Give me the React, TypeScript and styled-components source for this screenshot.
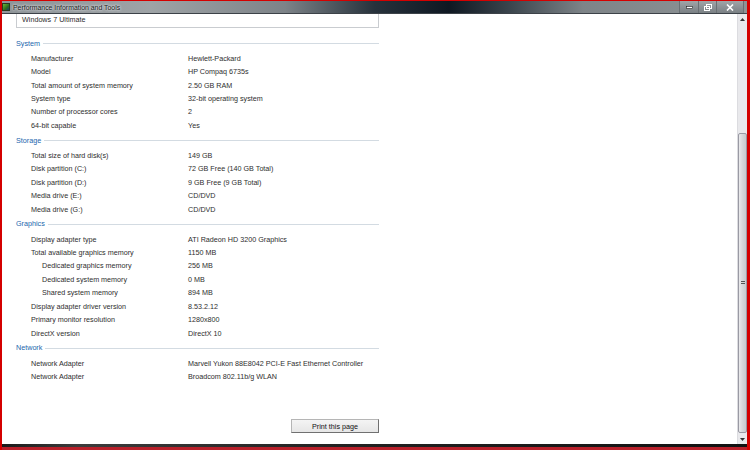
import styled, { createGlobalStyle } from "styled-components";

const GlobalStyle = createGlobalStyle`
    html, body {
        margin: 0;
        padding: 0;
        background: #d40000;
    }
    body {
        font-family: "Liberation Sans", Arial, sans-serif;
    }
`;

const Frame = styled.div`
    width: 750px;
    height: 450px;
    box-sizing: border-box;
    padding: 1px 3px 0 2px;
    background: #d40000;
    display: flex;
    flex-direction: column;
    overflow: hidden;
`;

const TitleBar = styled.div`
    height: 12px;
    flex-shrink: 0;
    display: flex;
    align-items: center;
    background: linear-gradient(
        90deg,
        #8e9498 0%,
        #9ea3a6 20%,
        #7d8388 38%,
        #27323c 50%,
        #0f1822 60%,
        #3a444c 68%,
        #7e8488 78%,
        #8f9496 100%
    );
    border-bottom: 1px solid #3c4248;
`;

const AppIcon = styled.div`
    width: 6px;
    height: 6px;
    margin: 0 3px 0 0;
    background: linear-gradient(135deg, #6bb83a 0%, #2f6f1f 60%, #1c3d6e 100%);
    border: 1px solid #2a3a20;
`;

const TitleText = styled.span`
    flex: 1;
    font-size: 6.9px;
    color: #1a1a1a;
    text-shadow: 0 0 3px #e8ecee, 0 0 2px #e8ecee;
    white-space: nowrap;
`;

const Caption = styled.div`
    display: flex;
    align-items: center;
    height: 100%;
    margin-right: 3px;
    background: linear-gradient(180deg, #a0a5a8 0%, #7a8084 100%);
    border-left: 1px solid #6a7074;
`;

const CaptionButton = styled.div<{ $w: number }>`
    width: ${(p) => p.$w}px;
    height: 100%;
    display: flex;
    align-items: center;
    justify-content: center;
    border-right: 1px solid #6a7074;
`;

const Body = styled.div`
    flex: 1;
    display: flex;
    min-height: 0;
    background: #fff;
`;

const Content = styled.div`
    flex: 1;
    padding: 0 0 0 14px;
    display: flex;
    flex-direction: column;
    font-size: 7.2px;
    color: #2e2e2e;
`;

const EditionBox = styled.div`
    width: 363px;
    box-sizing: border-box;
    height: 14px;
    border: 1px solid #c9ccd0;
    border-top: none;
    padding: 0 5px 3px;
    display: flex;
    align-items: center;
    margin-bottom: 7px;
`;

const Section = styled.div`
    width: 363px;
    display: flex;
    flex-direction: column;
`;

const Header = styled.div`
    height: 16px;
    padding-bottom: 0.5px;
    display: flex;
    align-items: center;
    gap: 3px;
    color: #2166ad;

    &::after {
        content: "";
        flex: 1;
        height: 1px;
        background: #d3dbe2;
        margin-top: 1px;
    }
`;

const Row = styled.div`
    height: 13.45px;
    display: flex;
    align-items: center;
`;

const Label = styled.div<{ $indent?: boolean }>`
    width: ${(p) => (p.$indent ? 146 : 157)}px;
    padding-left: ${(p) => (p.$indent ? 26 : 15)}px;
    white-space: nowrap;
`;

const Value = styled.div`
    white-space: nowrap;
`;

const ButtonRow = styled.div`
    width: 363px;
    display: flex;
    justify-content: flex-end;
    margin-top: 36px;
`;

const PrintButton = styled.button`
    width: 88px;
    height: 14px;
    padding: 0;
    font-family: "Liberation Sans", Arial, sans-serif;
    font-size: 7.2px;
    color: #111;
    background: linear-gradient(180deg, #f4f4f4 0%, #e6e6e6 100%);
    border: 1px solid #b5b5b5;
    border-right-color: #707070;
    border-bottom-color: #707070;
    border-radius: 0;
`;

const Scrollbar = styled.div`
    width: 9px;
    display: flex;
    flex-direction: column;
    background: #e9e9ec;
    border-left: 1px solid #dcdce0;
`;

const Arrow = styled.div`
    height: 10px;
    display: flex;
    align-items: center;
    justify-content: center;
`;

const Track = styled.div`
    flex: 1;
    display: flex;
    flex-direction: column;
    justify-content: flex-end;
`;

const Thumb = styled.div`
    height: 300px;
    margin: 0 0 1px 0;
    box-sizing: border-box;
    border: 1px solid #9a9aa4;
    border-radius: 2px;
    background: linear-gradient(90deg, #eaeaec 0%, #d6d8da 50%, #c8cbce 100%);
    display: flex;
    align-items: center;
    justify-content: center;
`;

const Grip = styled.div`
    width: 4px;
    height: 4px;
    background: repeating-linear-gradient(180deg, #555 0 1px, transparent 1px 2px);
`;

const BottomEdge = styled.div`
    height: 3px;
    flex-shrink: 0;
    background: linear-gradient(90deg, #1a1a1a 0%, #3c3c3c 10%, #222 45%, #111 100%);
`;

const Taskbar = styled.div`
    height: 3px;
    flex-shrink: 0;
    background: #b8202a;
`;

type Item = { label: string; value: string; indent?: boolean };

const sections: { title: string; items: Item[] }[] = [
    {
        title: "System",
        items: [
            { label: "Manufacturer", value: "Hewlett-Packard" },
            { label: "Model", value: "HP Compaq 6735s" },
            { label: "Total amount of system memory", value: "2.50 GB RAM" },
            { label: "System type", value: "32-bit operating system" },
            { label: "Number of processor cores", value: "2" },
            { label: "64-bit capable", value: "Yes" },
        ],
    },
    {
        title: "Storage",
        items: [
            { label: "Total size of hard disk(s)", value: "149 GB" },
            { label: "Disk partition (C:)", value: "72 GB Free (140 GB Total)" },
            { label: "Disk partition (D:)", value: "9 GB Free (9 GB Total)" },
            { label: "Media drive (E:)", value: "CD/DVD" },
            { label: "Media drive (G:)", value: "CD/DVD" },
        ],
    },
    {
        title: "Graphics",
        items: [
            { label: "Display adapter type", value: "ATI Radeon HD 3200 Graphics" },
            { label: "Total available graphics memory", value: "1150 MB" },
            { label: "Dedicated graphics memory", value: "256 MB", indent: true },
            { label: "Dedicated system memory", value: "0 MB", indent: true },
            { label: "Shared system memory", value: "894 MB", indent: true },
            { label: "Display adapter driver version", value: "8.53.2.12" },
            { label: "Primary monitor resolution", value: "1280x800" },
            { label: "DirectX version", value: "DirectX 10" },
        ],
    },
    {
        title: "Network",
        items: [
            { label: "Network Adapter", value: "Marvell Yukon 88E8042 PCI-E Fast Ethernet Controller" },
            { label: "Network Adapter", value: "Broadcom 802.11b/g WLAN" },
        ],
    },
];

const App = () => {
    return (
        <>
            <GlobalStyle />
            <Frame>
                <TitleBar>
                    <AppIcon />
                    <TitleText>Performance Information and Tools</TitleText>
                    <Caption>
                        <CaptionButton $w={18}>
                            <svg width="7" height="3" viewBox="0 0 7 3">
                                <rect x="0.5" y="0.5" width="6" height="2" fill="#fff" stroke="#222" strokeWidth="0.6" />
                            </svg>
                        </CaptionButton>
                        <CaptionButton $w={17}>
                            <svg width="8" height="7" viewBox="0 0 8 7">
                                <rect x="2.5" y="0.5" width="5" height="4" fill="none" stroke="#fff" strokeWidth="1" />
                                <rect x="0.5" y="2.5" width="5" height="4" fill="none" stroke="#fff" strokeWidth="1" />
                            </svg>
                        </CaptionButton>
                        <CaptionButton $w={26}>
                            <svg width="8" height="7" viewBox="0 0 8 7">
                                <path d="M1 0.5 L7 6.5 M7 0.5 L1 6.5" stroke="#fff" strokeWidth="1.6" />
                            </svg>
                        </CaptionButton>
                    </Caption>
                </TitleBar>
                <Body>
                    <Content>
                        <EditionBox>Windows 7 Ultimate</EditionBox>
                        {sections.map((s) => (
                            <Section key={s.title}>
                                <Header>{s.title}</Header>
                                {s.items.map((it, i) => (
                                    <Row key={i}>
                                        <Label $indent={it.indent}>{it.label}</Label>
                                        <Value>{it.value}</Value>
                                    </Row>
                                ))}
                            </Section>
                        ))}
                        <ButtonRow>
                            <PrintButton>Print this page</PrintButton>
                        </ButtonRow>
                    </Content>
                    <Scrollbar>
                        <Arrow>
                            <svg width="5" height="3" viewBox="0 0 5 3">
                                <path d="M0 3 L2.5 0 L5 3 Z" fill="#333" />
                            </svg>
                        </Arrow>
                        <Track>
                            <Thumb>
                                <Grip />
                            </Thumb>
                        </Track>
                        <Arrow>
                            <svg width="5" height="3" viewBox="0 0 5 3">
                                <path d="M0 0 L2.5 3 L5 0 Z" fill="#333" />
                            </svg>
                        </Arrow>
                    </Scrollbar>
                </Body>
                <BottomEdge />
                <Taskbar />
            </Frame>
        </>
    );
};

export default App;
